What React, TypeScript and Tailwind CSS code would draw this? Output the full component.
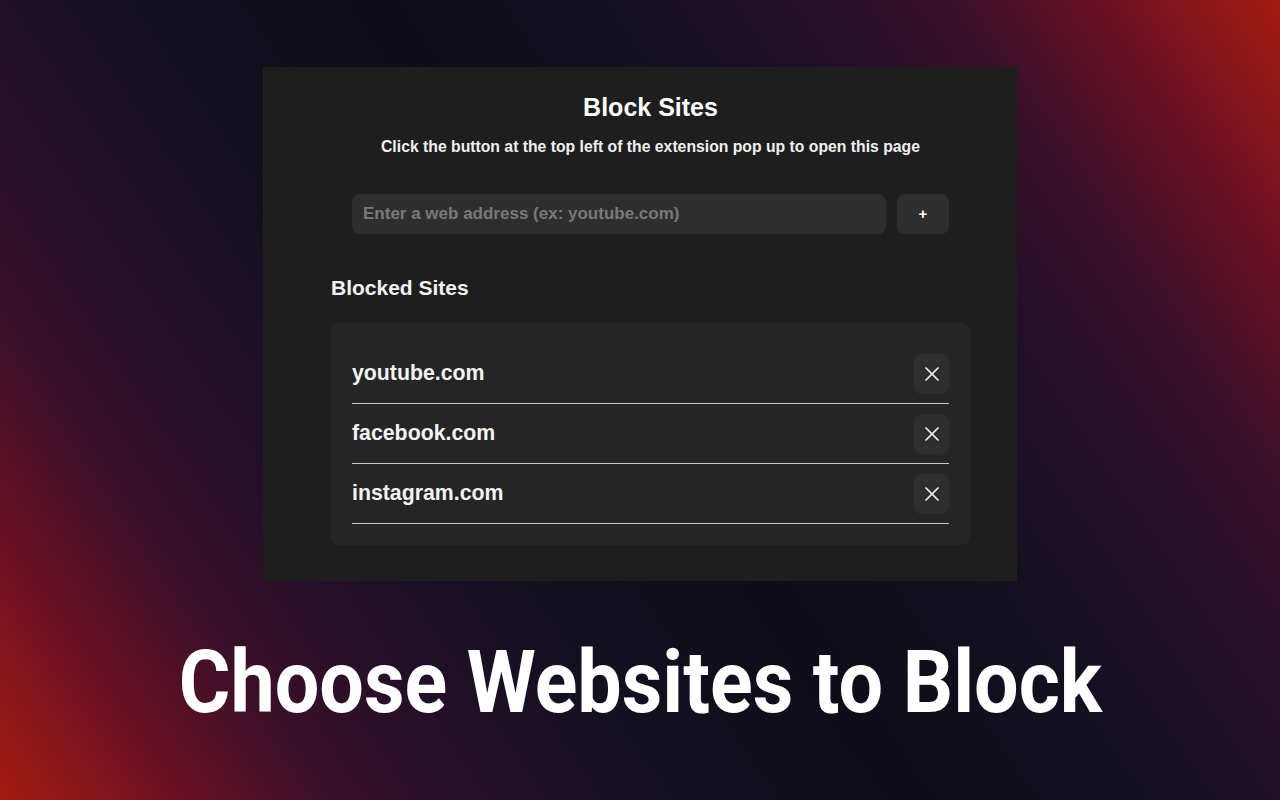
const sites = ["youtube.com", "facebook.com", "instagram.com"];

function CloseIcon() {
  return (
    <svg width="16" height="16" viewBox="0 0 16 16" fill="none" stroke="#f2f2f2" strokeWidth="1.7" strokeLinecap="round">
      <path d="M2 2l12 12M14 2L2 14" />
    </svg>
  );
}

export default function App() {
  return (
    <div className="relative h-[800px] w-[1280px] overflow-hidden bg-[linear-gradient(56deg,#a51c10_0%,#6a1024_10%,#3a1028_18%,#221028_27%,#141020_36%,#0f0d1a_50%,#141020_64%,#221028_73%,#3a1028_82%,#6a1024_90%,#a51c10_100%)] font-['Liberation_Sans',Arial,sans-serif]">
      <div className="flex flex-col items-center pt-[67px]">
        {/* Extension page panel */}
        <div className="w-[754px] bg-[#1e1e1e] pl-[68px] pr-[47px] pt-[24px] pb-[36px] text-white">
          <h1 className="text-center text-[25px] font-bold leading-[32px]">Block Sites</h1>
          <p className="mt-[16px] text-center text-[15.75px] font-bold leading-[16px] text-[#f0f0f0]">
            Click the button at the top left of the extension pop up to open this page
          </p>

          <div className="mt-[39px] flex gap-[11px] px-[21px]">
            <div className="flex h-[40px] flex-1 items-center rounded-[8px] bg-[#2e2e2e] px-[11px]">
              <span className="text-[17px] font-bold text-[#7a7a7a]">Enter a web address (ex: youtube.com)</span>
            </div>
            <button className="flex h-[40px] w-[52px] items-center justify-center rounded-[8px] bg-[#2e2e2e] text-[15px] font-bold text-white">
              +
            </button>
          </div>

          <h2 className="mt-[42px] text-[21px] font-bold leading-[24px] text-[#f4f4f4]">Blocked Sites</h2>

          <div className="mt-[23px] rounded-[8px] bg-[#252525] px-[21px] pt-[21px] pb-[21px]">
            {sites.map((s) => (
              <div key={s} className="flex items-center justify-between border-b-[1.5px] border-[#c8c8c8] pt-[10px] pb-[9px]">
                <span className="text-[21.3px] font-bold text-[#f4f4f4]">{s}</span>
                <button className="flex h-[40px] w-[35px] items-center justify-center rounded-[8px] bg-[#2e2e2e]">
                  <CloseIcon />
                </button>
              </div>
            ))}
          </div>
        </div>

        <h3 className="mt-[51px] scale-x-[0.908] whitespace-nowrap text-center font-['Roboto',sans-serif] text-[87px] font-bold leading-[100px] text-white">
          Choose Websites to Block
        </h3>
      </div>
    </div>
  );
}
